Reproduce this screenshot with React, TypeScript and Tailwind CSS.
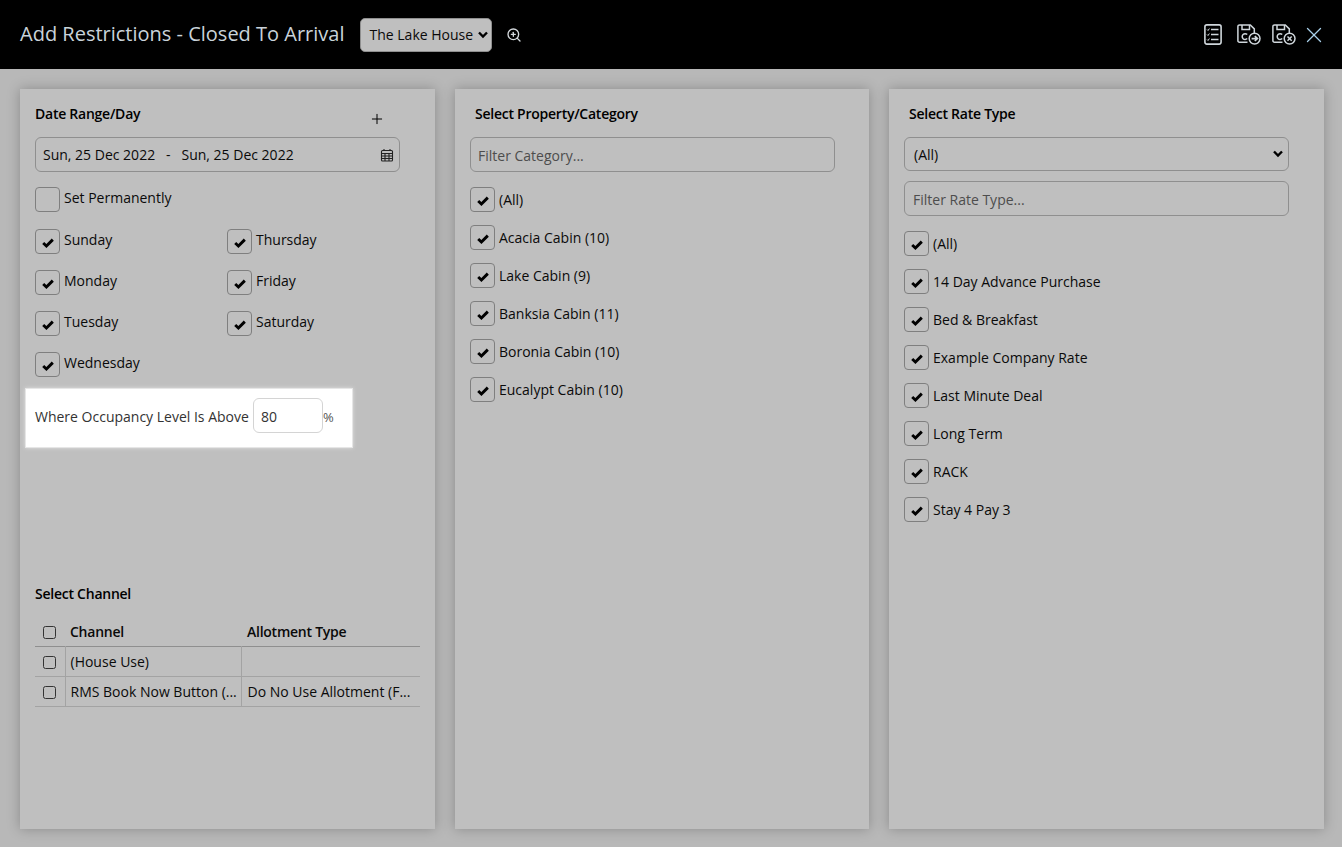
import React from "react";
import { Plus, X, ZoomIn } from "lucide-react";

const font = "font-['Open_Sans',sans-serif]";

function Box({ checked = true }: { checked?: boolean }) {
  return (
    <span className="w-[25px] h-[25px] shrink-0 rounded-[4px] border border-[#7f7f7f] flex items-center justify-center">
      {checked && (
        <svg width="12" height="10" viewBox="0 0 12 10" className="mt-[2px]">
          <path d="M1.2 5 4.4 8 10.8 1.6" fill="none" stroke="#000" strokeWidth="2.9" />
        </svg>
      )}
    </span>
  );
}

function CheckRow({ label, checked = true, tall = false }: { label: string; checked?: boolean; tall?: boolean }) {
  return (
    <div className="flex items-start gap-[4px] h-[26px]">
      <Box checked={checked} />
      <span className={`text-[14px] text-[#0a0a0a] ${tall ? "leading-[26px]" : "leading-[22px]"}`}>{label}</span>
    </div>
  );
}

function Heading({ children, className = "" }: { children: React.ReactNode; className?: string }) {
  return <h2 className={`text-[14px] leading-[20px] font-semibold text-black tracking-[-0.25px] ${className}`}>{children}</h2>;
}

function Chevron() {
  return (
    <svg width="10" height="8" viewBox="0 0 10 8" fill="none" stroke="#000" strokeWidth="2.4">
      <path d="M1 1.5 5 5.5 9 1.5" />
    </svg>
  );
}

function FloppyIcon({ kind }: { kind: "add" | "remove" }) {
  return (
    <svg width="24" height="21" viewBox="0 0 24 21" fill="none" stroke="#cfd6db" strokeWidth="1.5">
      <path d="M10.5 18.3H2.5A1.6 1.6 0 0 1 .9 16.7V2.5A1.6 1.6 0 0 1 2.5.9h10.8l4 4v4.4" />
      <path d="M5 1v4.6h7.5V1" />
      <path d="M10.2 10.6a2.9 2.9 0 1 0 0 4" />
      <circle cx="17.6" cy="14.6" r="5.4" />
      {kind === "add" ? (
        <path d="M14.6 14.6h5.6M17.8 12.2l2.6 2.4-2.6 2.4" strokeWidth="1.7" />
      ) : (
        <path d="M15.5 12.5l4.2 4.2M19.7 12.5l-4.2 4.2" />
      )}
    </svg>
  );
}

const categories = ["(All)", "Acacia Cabin (10)", "Lake Cabin (9)", "Banksia Cabin (11)", "Boronia Cabin (10)", "Eucalypt Cabin (10)"];
const rateTypes = ["(All)", "14 Day Advance Purchase", "Bed & Breakfast", "Example Company Rate", "Last Minute Deal", "Long Term", "RACK", "Stay 4 Pay 3"];
const inputClass = "h-[35px] rounded-[6px] border border-[#8f8f8f] flex items-center text-[14px]";
const tableBox = "block ml-[8px] w-[13px] h-[13px] appearance-none rounded-[2.5px] border border-[#333]";

export default function App() {
  return (
    <div className={`${font} w-[1342px] h-[847px] overflow-hidden bg-[#b8b8b8] flex flex-col`}>
      {/* Header */}
      <header className="h-[69px] shrink-0 bg-black flex items-center pl-[20px] pr-[22px]">
        <h1 className="text-[20px] text-[#c9d3da] leading-[28px] -mt-[2px]">Add Restrictions - Closed To Arrival</h1>
        <div className="ml-[15px] w-[132px] h-[34px] rounded-[5px] bg-[#bfbfbf] border border-[#8f8f8f] flex items-center pl-[9px] pr-[3px] justify-between">
          <span className="text-[14px] leading-[20px] pt-[1px] text-[#0a0a0a] whitespace-nowrap">The Lake House</span>
          <Chevron />
        </div>
        <ZoomIn size={16} strokeWidth={2} className="ml-[14px] text-[#d5dade]" />
        <div className="ml-auto flex items-center">
          <svg width="18" height="21" viewBox="0 0 18 21" fill="none" stroke="#cfd6db" strokeWidth="1.6">
            <rect x="0.9" y="0.9" width="16.2" height="19.2" rx="2" />
            <path d="M7 5.5h7.5M7 10.5h7.5M7 15.5h7.5" strokeWidth="1.3" />
            <path d="M3 5.5l1 1 1.4-2M3 10.5l1 1 1.4-2M3 15.5l1 1 1.4-2" strokeWidth="1" />
          </svg>
          <span className="ml-[15px] flex"><FloppyIcon kind="add" /></span>
          <span className="ml-[11px] flex"><FloppyIcon kind="remove" /></span>
          <X size={26} strokeWidth={1.15} className="text-[#a9d0ea] -mx-[6.5px] ml-[5px]" />
        </div>
      </header>

      {/* Panels */}
      <main className="grid grid-cols-[415px_414px_435px] gap-[20px] pl-[20px] pt-[20px]">
        <section className="h-[740px] bg-[#bfbfbf] shadow-[0_0_12px_rgba(0,0,0,0.25)] pl-[15px] pr-[15px] pt-[15px] flex flex-col">
          <div className="flex justify-between w-[365px] h-[33px]">
            <Heading>Date Range/Day</Heading>
            <Plus size={16} strokeWidth={1.5} className="text-black mt-[7px] mr-[15px]" />
          </div>
          <div className={`${inputClass} w-[365px] pl-[7px] pr-[5px] justify-between text-[#0a0a0a]`}>
            <span className="whitespace-pre">Sun, 25 Dec 2022{"   "}-{"   "}Sun, 25 Dec 2022</span>
            <svg width="14" height="14" viewBox="0 0 14 14" fill="none" stroke="#222" strokeWidth="1.1">
              <rect x="1.5" y="2.5" width="11" height="10.5" rx="1" />
              <path d="M1.5 5.5h11M1.5 8h11M1.5 10.5h11M5 5.5V13M9 5.5V13M4 1v2M10 1v2" />
            </svg>
          </div>
          <div className="mt-[15px]">
            <CheckRow label="Set Permanently" checked={false} />
          </div>
          <div className="grid grid-cols-[192px_1fr] mt-[16px] gap-y-[15px]">
            <CheckRow label="Sunday" />
            <CheckRow label="Thursday" />
            <CheckRow label="Monday" />
            <CheckRow label="Friday" />
            <CheckRow label="Tuesday" />
            <CheckRow label="Saturday" />
            <CheckRow label="Wednesday" />
          </div>
          <div className="mt-[10px] -ml-[10px] w-[328px] h-[60px] bg-white border border-[#e6e6e6] flex items-start pt-[9px] pl-[9px] shadow-[0_0_4px_rgba(255,255,255,0.5)]">
            <span className="text-[14px] leading-[37px] text-[#333] whitespace-nowrap">Where Occupancy Level Is Above</span>
            <div className="ml-[4px] w-[70px] h-[35px] rounded-[6px] border border-[#d4d4d4] flex items-center pl-[7px] pt-[2px] text-[14px] text-[#333]">80</div>
            <span className="text-[13px] leading-[38px] text-[#555]">%</span>
          </div>
          <Heading className="mt-[136px]">Select Channel</Heading>
          <table className="mt-[14px] w-[385px] table-fixed text-[14px] text-[#0a0a0a] border-collapse">
            <colgroup>
              <col className="w-[30px]" />
              <col className="w-[176px]" />
              <col />
            </colgroup>
            <thead>
              <tr className="h-[28px] border-b border-[#8f8f8f]">
                <th className="p-0 pt-[2px]"><input type="checkbox" className={tableBox} /></th>
                <th className="px-[5px] text-left font-semibold tracking-[-0.25px]">Channel</th>
                <th className="px-[6px] text-left font-semibold tracking-[-0.25px]">Allotment Type</th>
              </tr>
            </thead>
            <tbody>
              <tr className="h-[30px] border-b border-[#a3a3a3]">
                <td className="p-0 pt-[2px] border-r border-[#a3a3a3]"><input type="checkbox" className={tableBox} /></td>
                <td className="px-[5px] border-r border-[#a3a3a3]">(House Use)</td>
                <td className="px-[6px]"></td>
              </tr>
              <tr className="h-[30px] border-b border-[#a3a3a3]">
                <td className="p-0 pt-[2px] border-r border-[#a3a3a3]"><input type="checkbox" className={tableBox} /></td>
                <td className="px-[5px] border-r border-[#a3a3a3] whitespace-nowrap overflow-hidden">RMS Book Now Button (...</td>
                <td className="px-[6px] whitespace-nowrap overflow-hidden">Do No Use Allotment (F...</td>
              </tr>
            </tbody>
          </table>
        </section>

        <section className="h-[740px] bg-[#bfbfbf] shadow-[0_0_12px_rgba(0,0,0,0.25)] pl-[15px] pt-[15px] flex flex-col">
          <Heading className="ml-[5px] h-[33px]">Select Property/Category</Heading>
          <div className={`${inputClass} w-[365px] pl-[7px] pt-[2px] text-[#4d4d4d]`}>Filter Category...</div>
          <div className="mt-[15px] flex flex-col gap-[12px]">
            {categories.map((c) => (
              <CheckRow key={c} label={c} tall />
            ))}
          </div>
        </section>

        <section className="h-[740px] bg-[#bfbfbf] shadow-[0_0_12px_rgba(0,0,0,0.25)] pl-[15px] pt-[15px] flex flex-col">
          <Heading className="ml-[5px] h-[33px]">Select Rate Type</Heading>
          <div className={`${inputClass} w-[385px] pl-[9px] pr-[5px] justify-between text-[#0a0a0a] !h-[34px]`}>
            <span>(All)</span>
            <Chevron />
          </div>
          <div className={`${inputClass} w-[385px] mt-[10px] pl-[8px] pt-[2px] text-[#4d4d4d]`}>Filter Rate Type...</div>
          <div className="mt-[15px] flex flex-col gap-[12px]">
            {rateTypes.map((r) => (
              <CheckRow key={r} label={r} tall />
            ))}
          </div>
        </section>
      </main>
    </div>
  );
}
